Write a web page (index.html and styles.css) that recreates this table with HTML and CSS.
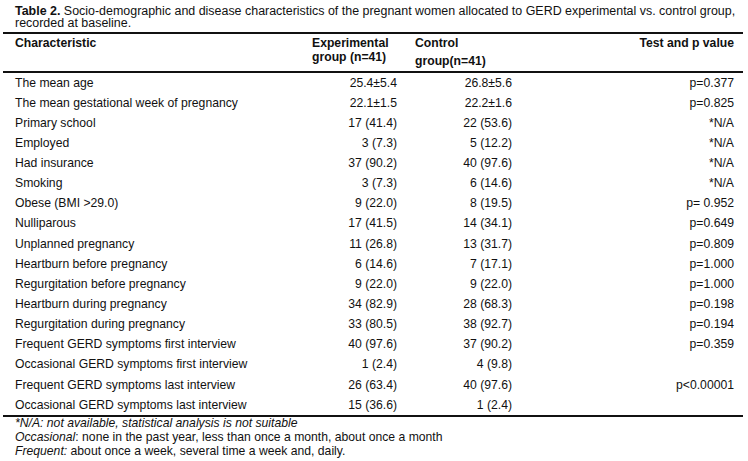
FILE: index.html
```html
<!DOCTYPE html>
<html lang="en">
<head>
  <meta charset="UTF-8">
  <title>Table 2</title>
  <link rel="stylesheet" href="styles.css">
</head>
<body>
  <p class="caption"><b>Table 2.</b> Socio-demographic and disease characteristics of the pregnant women allocated to GERD experimental vs. control group,<br>recorded at baseline.</p>

  <table class="data">
    <thead>
      <tr>
        <th class="c-name">Characteristic</th>
        <th class="c-exp">Experimental<br>group (n=41)</th>
        <th class="c-ctl"><span class="l1">Control</span><span class="l2">group(n=41)</span></th>
        <th class="c-p">Test and p value</th>
      </tr>
    </thead>
    <tbody>
      <tr><td class="c-name">The mean age</td><td class="c-exp">25.4±5.4</td><td class="c-ctl">26.8±5.6</td><td class="c-p">p=0.377</td></tr>
      <tr><td class="c-name">The mean gestational week of pregnancy</td><td class="c-exp">22.1±1.5</td><td class="c-ctl">22.2±1.6</td><td class="c-p">p=0.825</td></tr>
      <tr><td class="c-name">Primary school</td><td class="c-exp">17 (41.4)</td><td class="c-ctl">22 (53.6)</td><td class="c-p">*N/A</td></tr>
      <tr><td class="c-name">Employed</td><td class="c-exp">3 (7.3)</td><td class="c-ctl">5 (12.2)</td><td class="c-p">*N/A</td></tr>
      <tr><td class="c-name">Had insurance</td><td class="c-exp">37 (90.2)</td><td class="c-ctl">40 (97.6)</td><td class="c-p">*N/A</td></tr>
      <tr><td class="c-name">Smoking</td><td class="c-exp">3 (7.3)</td><td class="c-ctl">6 (14.6)</td><td class="c-p">*N/A</td></tr>
      <tr><td class="c-name">Obese (BMI &gt;29.0)</td><td class="c-exp">9 (22.0)</td><td class="c-ctl">8 (19.5)</td><td class="c-p">p= 0.952</td></tr>
      <tr><td class="c-name">Nulliparous</td><td class="c-exp">17 (41.5)</td><td class="c-ctl">14 (34.1)</td><td class="c-p">p=0.649</td></tr>
      <tr><td class="c-name">Unplanned pregnancy</td><td class="c-exp">11 (26.8)</td><td class="c-ctl">13 (31.7)</td><td class="c-p">p=0.809</td></tr>
      <tr><td class="c-name">Heartburn before pregnancy</td><td class="c-exp">6 (14.6)</td><td class="c-ctl">7 (17.1)</td><td class="c-p">p=1.000</td></tr>
      <tr><td class="c-name">Regurgitation before pregnancy</td><td class="c-exp">9 (22.0)</td><td class="c-ctl">9 (22.0)</td><td class="c-p">p=1.000</td></tr>
      <tr><td class="c-name">Heartburn during pregnancy</td><td class="c-exp">34 (82.9)</td><td class="c-ctl">28 (68.3)</td><td class="c-p">p=0.198</td></tr>
      <tr><td class="c-name">Regurgitation during pregnancy</td><td class="c-exp">33 (80.5)</td><td class="c-ctl">38 (92.7)</td><td class="c-p">p=0.194</td></tr>
      <tr><td class="c-name">Frequent GERD symptoms first interview</td><td class="c-exp">40 (97.6)</td><td class="c-ctl">37 (90.2)</td><td class="c-p">p=0.359</td></tr>
      <tr><td class="c-name">Occasional GERD symptoms first interview</td><td class="c-exp">1 (2.4)</td><td class="c-ctl">4 (9.8)</td><td class="c-p"></td></tr>
      <tr><td class="c-name">Frequent GERD symptoms last interview</td><td class="c-exp">26 (63.4)</td><td class="c-ctl">40 (97.6)</td><td class="c-p">p&lt;0.00001</td></tr>
      <tr><td class="c-name">Occasional GERD symptoms last interview</td><td class="c-exp">15 (36.6)</td><td class="c-ctl">1 (2.4)</td><td class="c-p"></td></tr>
    </tbody>
  </table>

  <div class="notes">
    <p><i>*N/A: not available, statistical analysis is not suitable</i></p>
    <p><i>Occasional</i>: none in the past year, less than once a month, about once a month</p>
    <p><i>Frequent:</i> about once a week, several time a week and, daily.</p>
  </div>
</body>
</html>
```

FILE: styles.css
```css
body {
  margin: 0;
  padding: 4.5px 5px 0 3px;
  font-family: "Liberation Sans", Arial, sans-serif;
  font-size: 12.2px;
  color: #111;
  background: #fff;
}
.caption {
  margin: 0 -5px 2px 0;
  padding-left: 12px;
  font-size: 12.45px;
  line-height: 12.5px;
  white-space: nowrap;
}
.data {
  width: 740px;
  table-layout: fixed;
  border-collapse: collapse;
  border-top: 2px solid #111;
  border-bottom: 2px solid #111;
}
.data th,
.data td {
  box-sizing: border-box;
  padding: 0;
}
.data th {
  text-align: left;
  vertical-align: top;
  font-weight: bold;
  height: 39px;
  padding-top: 2px;
  border-bottom: 2px solid #111;
  line-height: 14px;
}
.data td {
  height: 20.15px;
  line-height: 20px;
  white-space: nowrap;
}
.data .c-name {
  width: 302px;
  padding-left: 12px;
}
.data .c-exp {
  width: 100px;
}
.data td.c-exp {
  text-align: right;
  padding-right: 8px;
}
.data th.c-exp {
  padding-left: 7px;
}
.data .c-ctl {
  width: 115px;
}
.data td.c-ctl {
  text-align: right;
  padding-right: 8px;
}
.data th.c-ctl {
  padding-left: 10px;
}
.l1, .l2 {
  display: block;
}
.l2 {
  margin-top: 4px;
}
.data .c-p {
  text-align: right;
  padding-right: 9px;
}
.notes {
  padding-left: 12px;
  margin-top: -1px;
}
.notes p {
  margin: 0;
  line-height: 14px;
}
```
